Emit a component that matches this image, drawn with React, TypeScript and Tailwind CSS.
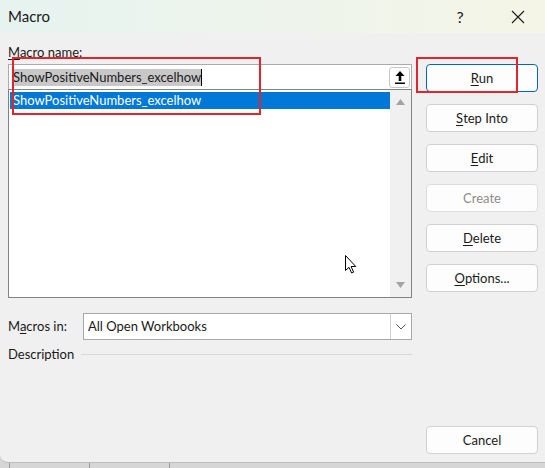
import React from "react";

const font = { fontFamily: 'Lato, "Noto Sans", sans-serif' };

function Btn({
  children,
  primary,
  disabled,
}: {
  children: React.ReactNode;
  primary?: boolean;
  disabled?: boolean;
}) {
  return (
    <button
      type="button"
      className={
        "flex h-[28px] w-full items-center justify-center rounded-[4px] border bg-[#fdfdfd] text-[13px] leading-none " +
        (primary
          ? "border-[#0067c0] text-[#1a1a1a]"
          : disabled
          ? "border-[#dcdcdc] text-[#8c8c8c]"
          : "border-[#d0d0d0] text-[#1a1a1a]")
      }
    >
      {children}
    </button>
  );
}

function U({ children }: { children: React.ReactNode }) {
  return <span className="underline underline-offset-2">{children}</span>;
}

export default function App() {
  return (
    <div
      className="relative h-[468px] w-[545px] overflow-hidden bg-[#d6d6d6] text-[#1a1a1a]"
      style={font}
    >
      {/* column ticks of the sheet behind */}
      <div className="absolute bottom-0 left-[9px] h-[5px] w-px bg-[#9a9a9a]" />
      <div className="absolute bottom-0 left-[89px] h-[5px] w-px bg-[#9a9a9a]" />
      <div className="absolute bottom-0 left-[169px] h-[5px] w-px bg-[#9a9a9a]" />

      <div className="relative flex h-[463px] flex-col rounded-bl-[8px] border-b border-[#bdbdbd] bg-[#f0f0f0]">
        {/* title bar */}
        <div className="flex h-[33px] items-center bg-gradient-to-r from-[#e6f3ef] via-[#eef4ec] to-[#f4f5e6] pl-2">
          <span className="text-[15px]">Macro</span>
          <div className="ml-auto flex h-full items-center gap-[12px] pr-[4px]">
            <span className="flex w-[46px] justify-center text-[16px]">?</span>
            <span className="flex w-[46px] justify-center">
              <svg width="14" height="14" viewBox="0 0 14 14" fill="none" stroke="#1a1a1a" strokeWidth="1.1">
                <path d="M1 1L13 13M13 1L1 13" />
              </svg>
            </span>
          </div>
        </div>

        {/* body */}
        <div className="flex flex-1 pb-[8px] pl-2 pr-[7px]">
          <div className="flex w-[404px] flex-col">
            <div className="pt-[9px] text-[13px] leading-[20px]">
              <U>M</U>acro name:
            </div>
            <div className="mt-[2px] flex h-[26px] items-center border border-[#ababab] bg-white pl-[4px] pr-px">
              <span className="bg-[#c8c8c8] text-[13px] leading-[17px]">ShowPositiveNumbers_excelhow</span>
              <span className="h-[17px] w-px bg-black" />
              <span className="ml-auto flex h-[21px] w-[21px] items-center justify-center rounded-[3px] border border-[#c6c6c6] bg-white">
                <svg width="10" height="13" viewBox="0 0 10 13" fill="#000">
                  <path d="M5 0L9.5 5H6.3V10H3.7V5H0.5Z" />
                  <rect x="0" y="11.5" width="10" height="1.5" />
                </svg>
              </span>
            </div>
            <div className="-mt-px flex h-[209px] border border-[#828282] bg-white">
              <div className="flex-1 pl-px pt-[2px]">
                <div className="flex h-[17px] items-center bg-[#0078d7] text-[13px] text-white">
                  <span className="pl-[3px]">ShowPositiveNumbers_excelhow</span>
                </div>
              </div>
              <div className="flex w-[21px] flex-col items-center justify-between bg-[#f0f0f0] py-[9px]">
                <svg width="9" height="6" viewBox="0 0 9 6" fill="#a3a3a3">
                  <path d="M4.5 0L9 6H0Z" />
                </svg>
                <svg width="9" height="6" viewBox="0 0 9 6" fill="#a3a3a3">
                  <path d="M0 0H9L4.5 6Z" />
                </svg>
              </div>
            </div>

            <div className="mt-[15px] flex items-center">
              <span className="w-[75px] text-[13px]">
                M<U>a</U>cros in:
              </span>
              <div className="flex h-[27px] flex-1 items-center border border-[#a8a8a8] bg-white">
                <span className="pl-[4px] text-[13px]">All Open Workbooks</span>
                <span className="ml-auto flex h-full w-[21px] items-center justify-center border-l border-[#d0d0d0]">
                  <svg width="10" height="6" viewBox="0 0 10 6" fill="none" stroke="#555" strokeWidth="1">
                    <path d="M0.5 0.5L5 5L9.5 0.5" />
                  </svg>
                </span>
              </div>
            </div>

            <div className="mt-[4px] flex items-center leading-[20px]">
              <span className="text-[13px]">Description</span>
              <span className="ml-[7px] h-px flex-1 bg-[#d9d9d9]" />
            </div>
          </div>

          <div className="ml-[14px] flex flex-1 flex-col gap-[12px] pt-[31px]">
            <Btn primary>
              <U>R</U>un
            </Btn>
            <Btn>
              <U>S</U>tep Into
            </Btn>
            <Btn>
              <U>E</U>dit
            </Btn>
            <Btn disabled>Create</Btn>
            <Btn>
              <U>D</U>elete
            </Btn>
            <Btn>
              <U>O</U>ptions...
            </Btn>
            <div className="mt-auto">
              <Btn>Cancel</Btn>
            </div>
          </div>
        </div>

        {/* red annotation boxes */}
        <div className="absolute left-[12px] top-[57px] h-[58px] w-[249px] border-2 border-[#e0262c]" />
        <div className="absolute left-[416px] top-[57px] h-[36px] w-[102px] border-2 border-[#e0262c]" />

        {/* mouse pointer */}
        <svg className="absolute left-[345px] top-[255px]" width="12" height="19" viewBox="0 0 12 19">
          <path
            d="M0.5 0.5V15.5L4 12.3L6.6 18L8.6 17.1L6.1 11.5H10.8Z"
            fill="#fff"
            stroke="#000"
            strokeWidth="1"
            strokeLinejoin="round"
          />
        </svg>
      </div>
    </div>
  );
}
